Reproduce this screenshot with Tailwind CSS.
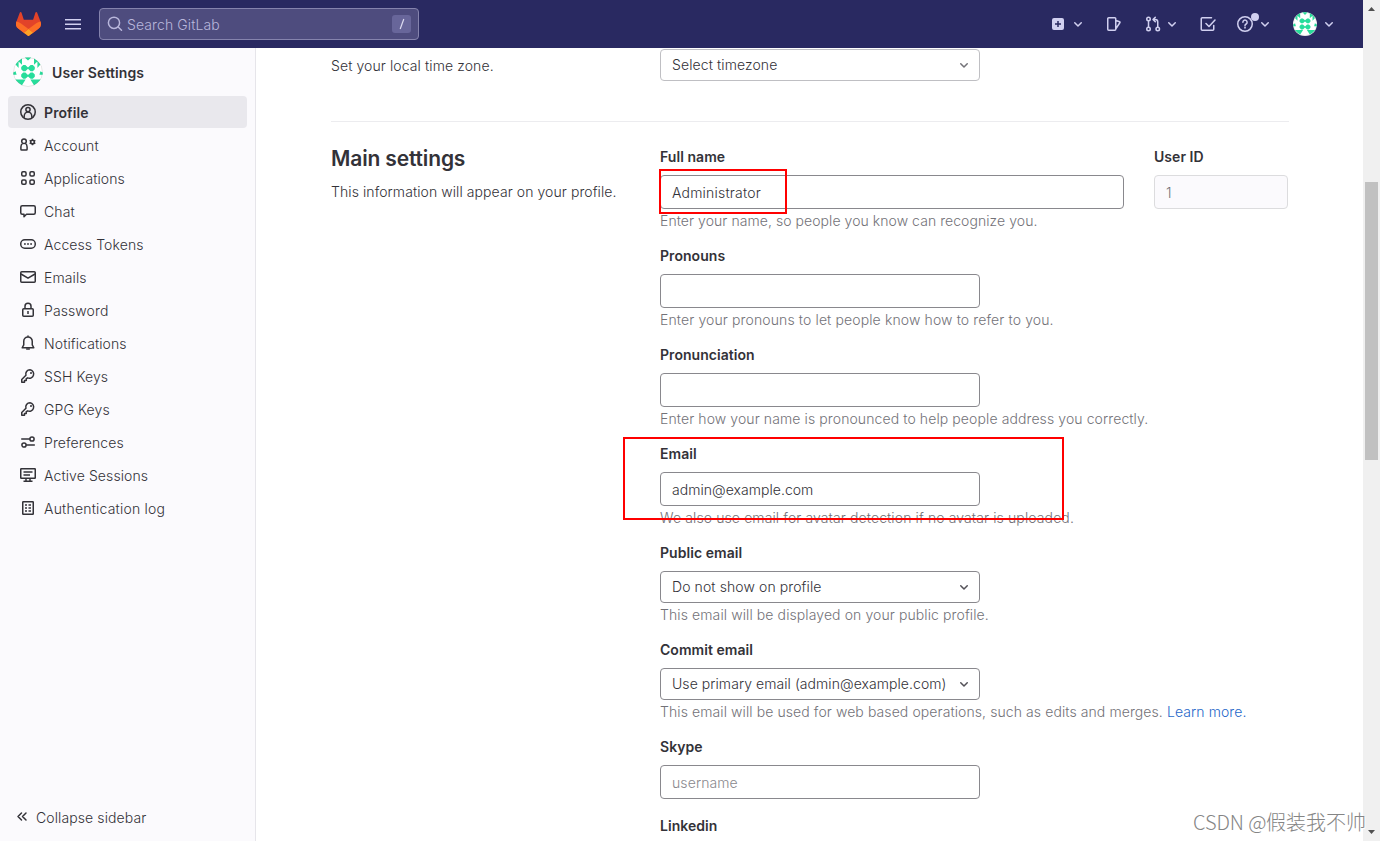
<!DOCTYPE html>
<html lang="en">
<head>
<meta charset="utf-8">
<title>Edit Profile · User Settings · GitLab</title>
<script src="https://cdn.jsdelivr.net/npm/@tailwindcss/browser@4"></script>
</head>
<body class="relative h-[841px] w-[1380px] overflow-hidden bg-white font-['Inter',sans-serif] text-sm leading-5 font-[350] tracking-[0.1px] text-[#333238]">
<svg class="hidden">
  <symbol id="chev" viewBox="0 0 16 16"><path d="M4.75 6.75 8 10l3.25-3.25" fill="none" stroke="currentColor" stroke-width="1.5" stroke-linecap="round" stroke-linejoin="round"/></symbol>
  <symbol id="identicon" viewBox="0 0 30 30">
    <circle cx="15" cy="15" r="15" fill="#fff"/>
    <g fill="#27dd9b">
      <path d="M10.200 8h2.200L15 10.400 17.600 8h2.200l2 2v2.200l-2 2h-2.200L15 11.800l-2.600 2.400h-2.200l-2-2V10z"/>
      <path d="M10.200 15.600h2.200L15 18l2.600-2.400h2.200l2 2v2.200l-2 2h-2.200L15 19.400l-2.600 2.400h-2.200l-2-2v-2.200z"/>
      <path d="M11.800.4h6.400L15 3.600z M9 1.400v6.400L5.600 4.600v6.400L2.600 7.600 A15 15 0 0 1 9 1.400z M21 1.400v6.400l3.400-3.200v6.400l3-3.400A15 15 0 0 0 21 1.400z M.3 17.700v-2.200L2.600 14.200l1 3.500z M29.700 17.700v-2.200l-2.300-1.300-1 3.500z"/>
      <path d="M2.300 22.600h6.500L5.700 26z M7.400 22.600h5.200L9 28.200 5.700 26z M27.700 22.600h-6.500l3.100 3.400z M22.600 22.600h-5.200L21 28.200l3.300-2.200z"/>
    </g>
    <circle cx="15" cy="15" r="14.500" fill="none" stroke="#000" stroke-opacity=".1"/>
  </symbol>
  <symbol id="key" viewBox="0 0 16 16"><path d="M10 1.750a4.250 4.250 0 0 0-4.050 5.550L1.750 11.500v2.750H4.500v-1.750h1.750v-1.750l1.450-.9A4.250 4.250 0 1 0 10 1.750z" fill="none" stroke="currentColor" stroke-width="1.500" stroke-linejoin="round"/><circle cx="11" cy="5" r="1" fill="currentColor"/></symbol>
</svg>

<header class="flex h-12 w-[1363px] items-center bg-[#292961] pl-4 text-[#d1d0f0]">
  <svg class="h-6 w-[25px]" viewBox="0 0 25 24"><path fill="#E24329" d="m24.507 9.500-.034-.09L21.082.562a.896.896 0 0 0-1.694.091l-2.290 7.010H7.825L5.535.653a.898.898 0 0 0-1.694-.09L.451 9.411.416 9.500a6.297 6.297 0 0 0 2.090 7.278l.012.010.030.022 5.160 3.867 2.560 1.935 1.554 1.176a1.051 1.051 0 0 0 1.268 0l1.555-1.176 2.560-1.935 5.197-3.890.014-.010A6.297 6.297 0 0 0 24.507 9.500Z"/><path fill="#FC6D26" d="m24.507 9.500-.034-.09a11.440 11.440 0 0 0-4.560 2.051l-7.447 5.632 4.742 3.584 5.197-3.890.014-.010A6.297 6.297 0 0 0 24.507 9.500Z"/><path fill="#FCA326" d="m7.707 20.677 2.560 1.935 1.555 1.176a1.051 1.051 0 0 0 1.268 0l1.555-1.176 2.560-1.935-4.743-3.584-4.755 3.584Z"/><path fill="#FC6D26" d="M5.010 11.461a11.430 11.430 0 0 0-4.560-2.050L.416 9.500a6.297 6.297 0 0 0 2.090 7.278l.012.010.030.022 5.160 3.867 4.745-3.584-7.444-5.632Z"/></svg>
  <svg class="ml-6 size-4" viewBox="0 0 16 16"><path d="M0 3.750h16M0 8.250h16M0 12.750h16" stroke="currentColor" stroke-width="1.500"/></svg>
  <div class="ml-[18px] flex h-8 w-80 items-center rounded-[4px] border border-[#8583ad] bg-[#4e4c7e] pr-[7px] pl-[7px] text-[#b9b7dc]">
    <svg class="size-4" viewBox="0 0 16 16"><circle cx="7" cy="6.800" r="5.600" fill="none" stroke="currentColor" stroke-width="1.500"/><path d="m11.200 11 3.300 3.300" stroke="currentColor" stroke-width="1.500" stroke-linecap="round"/></svg>
    <span class="ml-1 pt-px">Search GitLab</span>
    <span class="ml-auto flex h-[18px] w-[19px] items-center justify-center rounded-[3px] bg-[#68669a] text-[#dcdbf0]"><svg class="size-3" viewBox="0 0 12 12"><path d="M7.800 1 4.200 11" stroke="currentColor" stroke-width="1.200"/></svg></span>
  </div>
  <div class="ml-auto flex items-center pr-[26px]">
    <svg class="size-4" viewBox="0 0 16 16"><path fill="currentColor" fill-rule="evenodd" d="M4 2h8a2 2 0 0 1 2 2v8a2 2 0 0 1-2 2H4a2 2 0 0 1-2-2V4a2 2 0 0 1 2-2zm3.250 3v2.250H5v1.500h2.250V11h1.500V8.750H11v-1.500H8.750V5z"/></svg>
    <svg class="ml-1 size-4"><use href="#chev"/></svg>
    <svg class="ml-5 size-4" viewBox="0 0 16 16" fill="none" stroke="currentColor" stroke-width="1.500" stroke-linejoin="round"><path d="M2.750 1.750h6a1 1 0 0 1 1 1v10.500a1 1 0 0 1-1 1h-6a1 1 0 0 1-1-1V2.750a1 1 0 0 1 1-1zM10 4.500l3.600 1.300a.6.600 0 0 1 .4.700L10 12.500"/></svg>
    <svg class="ml-[23px] size-4" viewBox="0 0 16 16" fill="none" stroke="currentColor" stroke-width="1.500" stroke-linecap="round" stroke-linejoin="round"><circle cx="3.500" cy="3" r="1.750"/><circle cx="3.500" cy="13" r="1.750"/><circle cx="12.750" cy="13" r="1.750"/><path d="M3.500 5v6M12.750 11V6a2.500 2.500 0 0 0-2.500-2.500H8.500M10.300 1.200 8 3.500l2.300 2.300"/></svg>
    <svg class="ml-[3px] size-4"><use href="#chev"/></svg>
    <svg class="ml-5 size-4" viewBox="0 0 16 16" fill="none" stroke="currentColor" stroke-width="1.500" stroke-linecap="round" stroke-linejoin="round"><path d="M11.500 1.750H2.250a1 1 0 0 0-1 1v10.500a1 1 0 0 0 1 1h10.500a1 1 0 0 0 1-1V9.500M6 7.500l3 3 6-6.500"/></svg>
    <div class="relative ml-[21px] size-[18px]">
      <svg class="mt-px size-4" viewBox="0 0 16 16" fill="none" stroke="currentColor" stroke-width="1.500" stroke-linecap="round"><circle cx="8" cy="8" r="7.250"/><path d="M5.900 6.200a2.100 2.100 0 1 1 3.200 1.800c-.7.400-1.100.7-1.100 1.400"/><circle cx="8" cy="11.600" r=".3"/></svg>
      <span class="absolute -top-[2px] left-[14px] size-2 rounded-full bg-[#d1d0f0]"></span>
    </div>
    <svg class="ml-[2px] size-4"><use href="#chev"/></svg>
    <svg class="ml-5 size-6"><use href="#identicon"/></svg>
    <svg class="ml-1 size-4"><use href="#chev"/></svg>
  </div>
</header>

<div class="flex h-[793px] w-[1363px]">
  <aside class="flex h-full w-64 shrink-0 flex-col border-r border-[#e6e5ea] bg-[#fbfafd]">
    <div class="flex h-12 items-center pl-[13px] font-semibold"><svg class="size-[30px]"><use href="#identicon"/></svg><span class="ml-[9px] pt-0.5">User Settings</span></div>
    <nav class="flex flex-col gap-px px-2 [&_a]:flex [&_a]:h-8 [&_a]:w-[239px] [&_a]:items-center [&_a]:gap-2 [&_a]:rounded-[4px] [&_a]:pl-3 [&_span]:pt-0.5 [&_svg]:size-4">
      <a class="bg-[#e9e8ed] font-semibold"><svg viewBox="0 0 16 16" fill="none" stroke="currentColor" stroke-width="1.500"><circle cx="8" cy="8" r="7.250"/><circle cx="8" cy="5.600" r="2.100"/><path d="M4.200 13.800v-1.500C4.200 10 5.800 7.900 8 7.900s3.800 2.100 3.800 4.400v1.500"/></svg><span>Profile</span></a>
      <a><svg viewBox="0 0 16 16" fill="none" stroke="currentColor" stroke-width="1.500"><circle cx="4" cy="4.200" r="2.300"/><path d="M2.700 6.300C1.300 7 .9 8.500.9 10v2.200c0 .5.300.8.800.8h4.600c.5 0 .8-.3.800-.8V10c0-1.500-.4-3-1.800-3.700"/><circle cx="12.500" cy="5" r="1.800"/><path d="M12.500 1.700v1.400m0 3.800v1.400M9.650 3.350l1.200.7m3.300 1.900 1.200.7m-5.700 0 1.200-.7m3.300-1.900 1.200-.7"/></svg><span>Account</span></a>
      <a><svg viewBox="0 0 16 16" fill="none" stroke="currentColor" stroke-width="1.500"><rect x="1.750" y="1.750" width="4.300" height="4.300" rx="1.200"/><rect x="9.950" y="1.750" width="4.300" height="4.300" rx="1.200"/><rect x="1.750" y="9.950" width="4.300" height="4.300" rx="1.200"/><rect x="9.950" y="9.950" width="4.300" height="4.300" rx="1.200"/></svg><span>Applications</span></a>
      <a><svg viewBox="0 0 16 16" fill="none" stroke="currentColor" stroke-width="1.500" stroke-linejoin="round"><path d="M2.250 2.750h11.500a1.500 1.500 0 0 1 1.500 1.500v5.500a1.500 1.500 0 0 1-1.500 1.500H6.500L4 13.700v-2.450H2.250a1.500 1.500 0 0 1-1.500-1.500v-5.500a1.500 1.500 0 0 1 1.500-1.500z"/></svg><span>Chat</span></a>
      <a><svg viewBox="0 0 16 16"><rect x=".75" y="3.750" width="14.500" height="8.500" rx="4" fill="none" stroke="currentColor" stroke-width="1.500"/><path d="M4 7.200h1.800v1.600H4zM7.100 7.200h1.800v1.600H7.100zM10.200 7.200H12v1.600h-1.800z" fill="currentColor"/></svg><span>Access Tokens</span></a>
      <a><svg viewBox="0 0 16 16" fill="none" stroke="currentColor" stroke-width="1.500" stroke-linejoin="round"><rect x=".75" y="2.750" width="14.500" height="10.500" rx="1"/><path d="m1 5 7 4.200L15 5"/></svg><span>Emails</span></a>
      <a><svg viewBox="0 0 16 16" fill="none" stroke="currentColor" stroke-width="1.500"><rect x="2.750" y="6.750" width="10.500" height="7.500" rx="1"/><path d="M5 6.500V4.200a3 3 0 0 1 6 0v2.300M8 9v3"/></svg><span>Password</span></a>
      <a><svg viewBox="0 0 16 16" fill="none" stroke="currentColor" stroke-width="1.500" stroke-linecap="round" stroke-linejoin="round"><path d="M8 1.900c-2.500 0-4.250 1.900-4.250 4.300v3.600L2.200 12.750h11.600L12.250 9.800V6.200C12.250 3.800 10.500 1.900 8 1.900zM8 1v.8"/><path d="M6.700 13.900h2.600"/></svg><span>Notifications</span></a>
      <a><svg><use href="#key"/></svg><span>SSH Keys</span></a>
      <a><svg><use href="#key"/></svg><span>GPG Keys</span></a>
      <a><svg viewBox="0 0 16 16" fill="none" stroke="currentColor" stroke-width="1.500" stroke-linecap="round"><circle cx="12" cy="5" r="2.100"/><circle cx="4" cy="11" r="2.100"/><path d="M1.750 5h7.700M6.600 11h7.700"/></svg><span>Preferences</span></a>
      <a><svg viewBox="0 0 16 16" fill="none" stroke="currentColor" stroke-width="1.500"><rect x=".75" y="1.750" width="14.500" height="9.500" rx=".5"/><path d="M3.500 5h9M3.500 8H10M6 11v3M10 11v3M3.500 14.250h9"/></svg><span>Active Sessions</span></a>
      <a><svg viewBox="0 0 16 16" fill="none" stroke="currentColor" stroke-width="1.500"><rect x="2.750" y="1.750" width="10.500" height="12.500" rx=".5"/><path d="M5 5h2M8.500 5H11M5 8h2M8.500 8H11M5 11h2M8.500 11H11"/></svg><span class="tracking-[0.2px]">Authentication log</span></a>
    </nav>
    <div class="mt-auto flex h-12 items-center pl-[14px]"><svg class="size-4" viewBox="0 0 16 16" fill="none" stroke="currentColor" stroke-width="1.500" stroke-linecap="round" stroke-linejoin="round"><path d="M7.500 4 4 7.500 7.500 11M12 4 8.500 7.500 12 11"/></svg><span class="ml-1.5 pt-0.5">Collapse sidebar</span></div>
  </aside>

  <main class="ml-[75px] w-[958px]">
    <section class="flex h-[74px] border-b border-[#ececef] pt-px">
      <p class="w-[329px] pt-[7px]">Set your local time zone.</p>
      <div class="flex h-8 w-80 items-center justify-between rounded-[4px] border border-[#bfbfc3] pr-[7px] pl-[11px]"><span>Select timezone</span><svg class="size-4 text-[#737278]"><use href="#chev"/></svg></div>
    </section>
    <section class="flex pt-[25px]">
      <div class="w-[329px] shrink-0">
        <h4 class="text-[21px] leading-6 font-semibold tracking-[-0.15px]">Main settings</h4>
        <p class="mt-[11px] tracking-[0.08px]">This information will appear on your profile.</p>
      </div>
      <div class="w-[629px] shrink-0 whitespace-nowrap [&_label]:mb-2 [&_label]:block [&_label]:font-semibold [&_label]:tracking-[0.05px] [&_p]:mt-0.5 [&_p]:mb-[15px] [&_p]:text-[#737278]">
        <div class="flex gap-[30px]">
          <div class="w-[464px]">
            <label>Full name</label>
            <div class="flex h-[34px] items-center rounded-[4px] border border-[#89888d] px-[11px] pt-0.5 tracking-[0.2px]">Administrator</div>
            <p class="tracking-[0.06px]">Enter your name, so people you know can recognize you.</p>
          </div>
          <div class="w-[134px]">
            <label>User ID</label>
            <div class="flex h-[34px] items-center rounded-[4px] border border-[#dcdcde] bg-[#fbfafd] px-[11px] pt-0.5 text-[#737278]">1</div>
          </div>
        </div>
        <label>Pronouns</label>
        <div class="h-[34px] w-80 rounded-[4px] border border-[#89888d]"></div>
        <p class="tracking-[0.12px]">Enter your pronouns to let people know how to refer to you.</p>
        <label>Pronunciation</label>
        <div class="h-[34px] w-80 rounded-[4px] border border-[#89888d]"></div>
        <p>Enter how your name is pronounced to help people address you correctly.</p>
        <label>Email</label>
        <div class="flex h-[34px] w-80 items-center rounded-[4px] border border-[#89888d] px-[11px] pt-0.5 tracking-[0.04px]">admin@example.com</div>
        <p class="tracking-[0.11px]">We also use email for avatar detection if no avatar is uploaded.</p>
        <label>Public email</label>
        <div class="flex h-8 w-80 items-center justify-between rounded-[4px] border border-[#89888d] pr-[7px] pl-[11px]"><span>Do not show on profile</span><svg class="size-4 text-[#535158]"><use href="#chev"/></svg></div>
        <p>This email will be displayed on your public profile.</p>
        <label>Commit email</label>
        <div class="flex h-8 w-80 items-center justify-between rounded-[4px] border border-[#89888d] pr-[7px] pl-[11px]"><span class="tracking-[0.06px]">Use primary email (admin@example.com)</span><svg class="size-4 text-[#535158]"><use href="#chev"/></svg></div>
        <p class="tracking-[0.09px]">This email will be used for web based operations, such as edits and merges. <a class="text-[#1f68c9]">Learn more.</a></p>
        <label>Skype</label>
        <div class="mb-[17px] flex h-[34px] w-80 items-center rounded-[4px] border border-[#89888d] px-[11px] pt-0.5 text-[#89888d]">username</div>
        <label>Linkedin</label>
      </div>
    </section>
  </main>
</div>

<!-- highlight boxes -->
<div class="absolute top-[169px] left-[659px] h-[45px] w-[128px] border-2 border-[#f00]"></div>
<div class="absolute top-[437px] left-[623px] h-[83px] w-[441px] border-2 border-[#f00]"></div>

<!-- scrollbar -->
<div class="absolute top-0 right-0 flex h-full w-[17px] flex-col items-center bg-[#f0f0f0]">
  <svg class="mt-[7px] h-1 w-[7px]" viewBox="0 0 7 4"><path d="M0 4 3.500 0 7 4z" fill="#505050"/></svg>
  <div class="mt-[171px] h-[278px] w-[13px] bg-[#c1c1c1]"></div>
  <svg class="mt-auto mb-[7px] h-1 w-[7px]" viewBox="0 0 7 4"><path d="M0 0 3.500 4 7 0z" fill="#505050"/></svg>
</div>

<div class="absolute top-[808px] left-[1193px] flex font-['Noto_Sans_CJK_SC',sans-serif] text-[20px] leading-7 font-light tracking-normal whitespace-nowrap text-[#858585] [text-shadow:1px_1px_0_#fff]"><span class="w-[73px] tracking-[-0.1px] whitespace-pre">CSDN @</span><span>假装我不帅</span></div>
</body>
</html>
